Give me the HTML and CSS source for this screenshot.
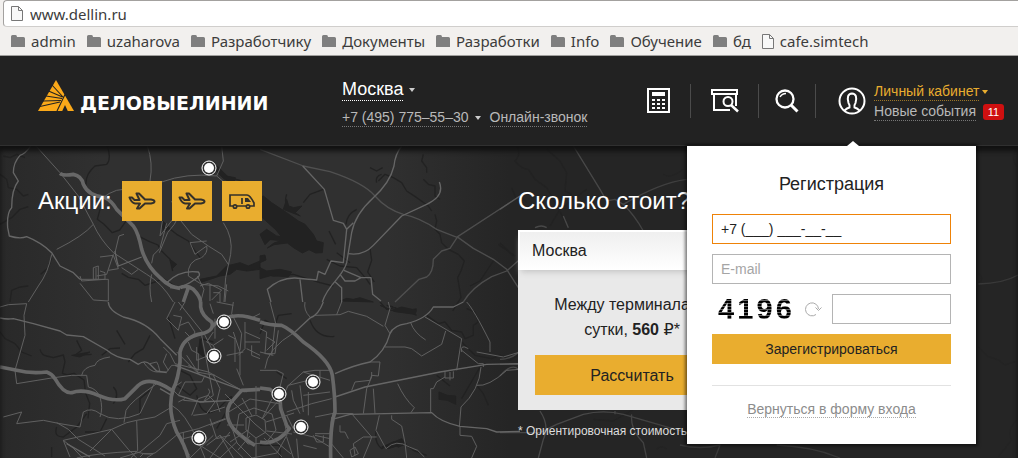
FILE: index.html
```html
<!DOCTYPE html>
<html lang="ru">
<head>
<meta charset="utf-8">
<meta name="viewport" content="width=device-width, initial-scale=1">
<title>Деловые Линии</title>
<link rel="stylesheet" href="styles.css">
</head>
<body>
<svg class="defs" width="0" height="0" aria-hidden="true">
  <symbol id="folder" viewBox="0 0 14 12"><path d="M0 1.500Q0 0 1.500 0H4.500Q6 0 6 2H12.500Q14 2 14 3.500V12H0Z" fill="#7f7f7f"/></symbol>
  <symbol id="page" viewBox="0 0 12 15"><path d="M.5.5H7.500L11.500 4.500V14.500H.5Z" fill="#f8f8f8" stroke="#777"/><path d="M7.500.5V4.500H11.500" fill="none" stroke="#777"/></symbol>
  <symbol id="plane" viewBox="0 0 28 18"><path d="M1.500 5.500H4L6.500 8H11.500L8.500 1.500H11L17 7.500H23Q26.500 8 26.500 9.500T23 11.500H17L11.500 16.500H9L12 11.500H7Q3.500 11 1.500 5.500Z" fill="none" stroke="#33302a" stroke-width="2" stroke-linejoin="round"/></symbol>
</svg>

<div class="browser">
  <div class="address">
    <svg width="12" height="15" aria-hidden="true"><use href="#page"/></svg>
    <input class="address-input" type="text" value="www.dellin.ru" aria-label="Адрес страницы">
  </div>
  <nav class="bookmarks" aria-label="Закладки">
    <a href="#"><svg width="14" height="12" aria-hidden="true"><use href="#folder"/></svg>admin</a>
    <a href="#"><svg width="14" height="12" aria-hidden="true"><use href="#folder"/></svg>uzaharova</a>
    <a href="#"><svg width="14" height="12" aria-hidden="true"><use href="#folder"/></svg>Разработчику</a>
    <a href="#"><svg width="14" height="12" aria-hidden="true"><use href="#folder"/></svg>Документы</a>
    <a href="#"><svg width="14" height="12" aria-hidden="true"><use href="#folder"/></svg>Разработки</a>
    <a href="#"><svg width="14" height="12" aria-hidden="true"><use href="#folder"/></svg>Info</a>
    <a href="#"><svg width="14" height="12" aria-hidden="true"><use href="#folder"/></svg>Обучение</a>
    <a href="#"><svg width="14" height="12" aria-hidden="true"><use href="#folder"/></svg>бд</a>
    <a href="#"><svg width="12" height="15" aria-hidden="true"><use href="#page"/></svg>cafe.simtech</a>
  </nav>
</div>

<header class="header">
  <a class="logo" href="#">
    <svg width="36" height="32" viewBox="0 0 36 32" aria-hidden="true">
      <path d="M18 0L36 31H0Z" fill="#fba919"/>
      <path d="M25 17L14 5M24.500 17L10.500 11M24 18.500L8 16M23 20.500L5 21M22 22L2 26.500M19 31L27 14.500" stroke="#222" stroke-width="1.100"/>
      <path d="M24 31.500H30L27 25Z" fill="#222"/>
    </svg>
    <span>ДЕЛОВЫЕЛИНИИ</span>
  </a>
  <div class="contacts">
    <div class="row"><button class="city dotted" type="button">Москва</button><i class="caret"></i></div>
    <div class="row"><a class="dotted" href="#">+7 (495) 775–55–30</a><i class="caret"></i><a class="dotted call" href="#">Онлайн-звонок</a></div>
  </div>
  <nav class="tools" aria-label="Сервисы">
    <a href="#" aria-label="Калькулятор"><svg width="24" height="26" viewBox="0 0 24 26"><path d="M1 1H22V24H1Z" fill="none" stroke="#fff" stroke-width="2"/><path d="M5 4H18V8H5ZM5 11h3v2H5zm5 0h3v2h-3zm5 0h3v2h-3zM5 15h3v2H5zm5 0h3v2h-3zm5 0h3v2h-3zM5 19h3v2H5zm5 0h3v2h-3zm5 0h3v2h-3z" fill="#fff"/></svg></a>
    <a href="#" aria-label="Отследить груз"><svg width="28" height="26" viewBox="0 0 28 26" fill="none" stroke="#fff" stroke-width="2"><path d="M1 2H26V6H1ZM3 6V22H19M25 6V18"/><circle cx="17" cy="13.500" r="4.500"/><path d="M20 17L27 23.500" stroke-width="2.500"/></svg></a>
    <a href="#" aria-label="Поиск"><svg width="24" height="26" viewBox="0 0 24 26" fill="none" stroke="#fff"><circle cx="10" cy="11" r="8.500" stroke-width="2.300"/><path d="M16 17L22.500 23.500" stroke-width="3"/><path d="M5 9Q7 5.500 11 5.500" stroke-width="1.500"/></svg></a>
  </nav>
  <div class="account">
    <svg width="28" height="28" viewBox="0 0 28 28" fill="none" stroke="#fff" stroke-width="2" aria-hidden="true"><circle cx="14" cy="14" r="12.500"/><path d="M6.500 23.500Q9 21 11.500 20.500Q12 18 10.500 16Q8 7 14 6.500Q20 7 17.500 16Q16 18 16.500 20.500Q19 21 21.500 23.500"/></svg>
    <div>
      <div class="row"><a class="dotted cabinet" href="#">Личный кабинет</a><i class="caret gold"></i></div>
      <div class="row"><a class="dotted" href="#">Новые события</a><span class="badge">11</span></div>
    </div>
  </div>

  <form class="popup">
    <h2>Регистрация</h2>
    <input class="field active" type="text" value="+7 (___) ___-__-__" aria-label="Телефон">
    <input class="field" type="email" placeholder="E-mail" aria-label="E-mail">
    <div class="captcha">
      <span class="code"><span>4</span><span>1</span><span>9</span><span>6</span></span>
      <button class="refresh" type="button" aria-label="Обновить код"><svg width="17" height="16" viewBox="0 0 17 16" fill="none" stroke="#aaa"><path d="M11 13.500A6.500 6.500 0 1 1 13.500 8M10.500 6.500L13.500 9.500L16.500 6.500"/></svg></button>
      <input class="field" type="text" aria-label="Код с картинки">
    </div>
    <button class="gold-button submit" type="submit">Зарегистрироваться</button>
    <div class="back"><a href="#">Вернуться в форму входа</a></div>
  </form>
</header>

<main class="hero">
  <svg class="map" viewBox="0 0 1018 312" preserveAspectRatio="xMinYMin slice" aria-hidden="true">
    <defs><linearGradient id="ground" x1="0" x2="1"><stop offset="0" stop-color="#292929"/><stop offset=".1" stop-color="#303030"/><stop offset=".38" stop-color="#303030"/><stop offset=".5" stop-color="#252525"/><stop offset="1" stop-color="#252525"/></linearGradient>
    <linearGradient id="haze" x1="0" x2="1"><stop offset=".36" stop-color="#252525" stop-opacity="0"/><stop offset=".52" stop-color="#252525" stop-opacity=".65"/></linearGradient></defs>
    <path d="M0 0H1018V312H0Z" fill="url(#ground)"/>
    <g class="water" transform="scale(.33333)">
      <path d="M322 0Q335 40 320 55L285 60Q255 85 258 120M0 85l20 15 5 25 25 5 20 20 15-5M10 30l20 5 20-10 25 10M85 182L60 190 35 215 0 235M300 190l-8 30 20 15 25 25 22-8 20-28 20 18 20 30 30 15 25 10 10 20M485 225l20 20 25 20 35 20 20 30 20 25M485 315l25 25 8 35M155 335L145 365 122 385M365 382l20 12 30 6 20 18 30-10 25-10 40 25M30 468l5-35 25-10 25-3M650 60l30 30 20 8 45 12 30 10"/>
      <path d="M485 222l25 25-20 12zM510 340l20 15-12 12zM648 60l30 30 28 5-5 18-30-15-25-25z" class="lake"/>
      <path d="M600 400l50-10 30-30 40-10 25 10 35-15v25l-40 5-30-5-20 15-30 5-60 20z" class="lake"/>
    </g>
    <g class="water" transform="translate(0 156) scale(.33333)">
      <path d="M0 90l15 20 30 15 20 25 30 12M120 142q5 18 20 20l20 5 30-8 5 20-8 35 15 5 20-5 30 20 5 40 12 30-5 45M350 85l25 42M230 115l15 30-20 15 50-3M360 138l-30 2-25 20M450 100l-20 40-25 15-20 25M505 45l20 65M530 200l40 20 20 40-20 20-40-30M170 375q-10 30 20 30l40-30 30-40M340 255q20 20 0 50M420 340V290l30-25M320 350l-20 40-45 0M590 280q20 90 80 25t-20 75M640 120l-35-10-10 40 30 20M155 435v30"/>
      <path d="M215 160l55-10-30 15z M600 110l15 60-20-20z" class="lake"/>
    </g>
    <g class="water" transform="translate(260 0) scale(.33333)">
      <path d="M330 65l20 10 18-10M350 110q-5-20 15-25M355 105l20-20 25 10 25 15 15 25 30 20 35 25 10 15M490 25l-5 20 15 20v15M490 100l15 15 20 5v30l15 10M525 205l5 20-5 25 15 15 5 25 20 20 30 15 18 20-10 30-10 20 5 30 5 30-25 40M190 130l-40 15-20 25M80 145q-10 30 10 45l30-5M290 190q-30 15-32 45M207 255l20 40M200 340l40 20 50 5 30 35 10 15M330 308l5 35-12 35 20 30M700 345l-40 60-30 15M715 295l50 35M755 125l12 30M230 320l40 30M0 380l40 10 60-5 80 25 40 10"/>
      <path class="lake" d="M0 155l10-5 25 20 45 30 35 25 20 10 25 30 10 20 20 5-3 30-20 1-20-10-20 10-25-15-20-15-40 5-20 10 20-15 30-10-25-30-50-45zM70 190l10-30 6 20 15 5 25-5-20 20 15 10zM0 265l20-15 30 20 25 3 20 15-40-5-25-2-15 15zM0 330l15-3 3 15-18 8zM0 365l20 10 40-5 35 8-10 15-50-5-35 10zM240 465l20-8 20 3 20-5 40 13z"/>
    </g>
    <g class="water" transform="translate(260 156) scale(.33333)">
      <path d="M360 0l20 22 25-5 20 12 45-8M450 30l20 10M500 40l35 25 20-5 20 25 30 5 10 20 25-10V70l15-10-10-30-25-10M605 120l40 40 50 10 25-10 30 15 25-15M150 55q20 55 73 48M0 95l15-40 30 15 10-30 40-5M530 220l40 32M660 195l-55 95M650 250l20 25 15 35M350 380q-10 40 15 60l35-20 15 15 25-10M380 10l20 5M440 430l20 15 40 15M0 430h60v38M50 210l30 20"/>
      <path class="lake" d="M537 270l25 10 25 2v25l-25-12-25-3zM360 10l35 15 30-10 45 10-5 12-60-8zM365 435l60-25 10 15-50 15z"/>
    </g>
    <g class="water" transform="translate(500 0) scale(.33333)"><path d="M50 0q15 25-5 45 20 25 40 25l20 30 35 25 30 55 25 45M140 10l40 35 20 35-5 55 20 10M60 145l20 25M150 240l30-50 40-30 40-30M0 290l40 40M280 820l60 5 70-40M470 910q15-15 30 0M550 70q-40 30-60 15"/></g>
    <g class="water" transform="translate(680 -6) scale(.33333)"><path d="M895 400q20 15 0 30l-10 50M895 620l30 30 30 10 20 15 30-10M1010 840q-30 30-15 60l-40 50M1010 20q-20 30 0 60"/></g>

    <g class="roads thin" transform="scale(.33333)">
      <path d="M108 0L180 80 235 150 280 235Q300 280 340 320L440 385Q485 410 520 468M280 235Q250 270 170 310M155 325Q145 380 115 420L85 468M280 180Q330 130 370 130M485 108Q560 80 650 90L720 150 780 185M442 0Q460 50 450 105M650 90L670 45 665 0M487 225L480 270 530 205M515 165l20 50 40 50 50 35 40 25 20 30M478 320l25-60 20-25 15-30M455 352l5-25 20-20 20-75M670 230q30 45 22 95l-15 70-5 73M455 385q-10 40 0 83M570 290l50-5M570 290l15 35 35-25M620 300q5 20-15 35-45 10-40 55l40 25 50 5 30 15M592 390l20 40-10 38M600 420l25-8 40 20-30 30M300 333l40-5 15 40-30 5M340 325l-20 60-30 5M345 320l12-50 15-5M365 365l30 20 20-15M280 365l15-5v40h-15zM288 365v35M300 375l15 5v20l-70 5-5-15M240 400l85 0v65l-45-3-40-50M630 415v50M680 415l-5 53M640 440h20v28"/>
    </g>
    <g class="roads medium" transform="scale(.33333)"><path d="M92 0Q75 25 60 28 40 50 40 80L55 105Q35 130 35 185 20 200 23 245L28 270Q60 280 80 272 125 290 155 320L180 360 220 380 240 400M345 315Q350 345 355 360L425 333M500 410Q540 370 595 378 605 390 585 400 545 430 510 425"/></g>
    <g class="roads heavy" transform="scale(.33333)"><path d="M180 82Q190 90 220 85 245 90 250 115 265 150 315 155 335 165 350 190L400 240Q415 260 425 310 440 360 480 395 510 425 540 427M540 425Q560 415 580 430 600 450 602 468M565 425l-15 43"/></g>

    <g class="roads thin" transform="translate(0 156) scale(.33333)">
      <path d="M0 15L25 8 80 5 72 40 75 100 45 205 50 245 155 228 215 220 260 220 265 255Q290 260 300 285 310 320 300 345M245 220q5-25 40-30 5-20 45-25M10 345l55-15-15 35 80-10 50 10 60 10 10-45q25-15 50 5 50 30 120 0L465 240M372 362L378 325Q390 300 470 245M190 415L335 382 380 362 410 355 465 345 515 315M190 415l20 50M190 415q30 20 60 55M170 362l35 20 30 30 80 50M335 382l-65 65M335 382l50 60 25 26M410 355l3 90-20 23M410 450q50 15 65-5l60-50 60-15 80-30M515 310q40 20 80 110l20 48M230 468q60-15 180-20M500 365l-20 35-60 50-60 18M500 365l40-10M430 180q20 30 40 30h30l15-20 20 0M450 185l20-5 5 10 5 20M490 135l20 20 15 30 100 25 110 60M500 155l-10 25 15 25M530 150l60 60 55 10M535 0l20 25 60 75 20 40M555 0l-15 25M520 40l25 5-10 40-35-35 25-50M540 70l25-10 20 30-10 20-20-20M565 120l10 25 20 10v50l-30-15M605 100l25 130 10 50-30 20-60-5M545 240l-30 20 20 20 20-40 50 0 10-20M610 300l20-30-5-10M575 340l20-50 30-10 20 20-25 35-40 5M555 290l-20 10M640 90l-20 30 20 10 30-20M640 220l20 40-10 40 10 30M700 90l20 60 0 70M700 0l-5 35 30 60-5 50M735 60v80l-20 20M640 35l-10-30M650 0l50 10M735 90l45 20M735 120l45 0M740 140l40 20M680 160l50-10M730 250l-20-50M630 330l45-15M630 350l20 60 40-10M680 350l-50 20M620 430l40-30 40 68M600 430l60 38M640 400l-70 68M690 390l-60 78M710 420l-50 48M660 400l70 68M550 390v50l20 20M550 410l60-15M420 465l10-10h30l-20 13"/>
      <path d="M590 135v40l50-20M560 160l40 60M640 130l20 50M645 50v60M750 50l30-15M755 130v30l25 10M685 100l20 10v70"/>
    </g>
    <g class="roads medium" transform="translate(0 156) scale(.33333)"><path d="M0 48q20 5 40 2l60 15 80 22 20 12 50 5 70 40Q350 170 390 172l25 15q20-15 35 0l20 20 30 5M325 0Q325 25 370 45 440 60 480 110L530 160M525 190L740 270M535 280L600 300 700 295M200 425L270 465M515 280L480 260"/></g>
    <g class="roads heavy" transform="translate(0 156) scale(.33333)"><path d="M0 195Q30 200 50 205 90 215 140 210 155 215 165 230 190 275 215 272 250 260 295 280 340 300 375 290 390 275 415 250 450 220 515 265M602 0V15Q605 40 635 60 645 85 605 95 550 105 540 150V180Q535 230 520 260 500 320 530 390 555 430 565 468M635 75Q680 30 745 45L780 55M780 262L725 265 690 305Q670 340 700 380 730 410 765 430"/></g>

    <g class="roads medium" transform="translate(260 0) scale(.33333)"><path d="M425 0Q405 25 402 60 390 110 340 155 285 205 275 260L260 350Q255 370 230 400 195 440 187 468"/><path d="M128 60L193 130 220 223 250 232 260 250 250 350 213 345 195 385 175 376 170 402 105 396Q60 395 22 430L33 468M260 250L280 230M265 323Q310 330 340 298L425 210 500 175Q555 150 538 108M225 407L245 425V468M240 385L255 405H285L303 395 252 373M303 395h30l5 50 25 20M120 400l8 68"/></g>
    <g class="roads medium" transform="translate(260 0) scale(.33333)" opacity=".6"><path d="M0 10L130 60 210 77Q310 110 345 150 380 190 430 205 480 215 530 250 580 270 595 275L640 307 700 340 740 370 775 425M780 150L593 272 570 307 545 315 520 340Q520 380 500 393L477 400 405 468"/><path d="M610 468Q635 425 695 392L740 375 780 340"/></g>

    <g class="roads thin" transform="translate(260 156) scale(.33333)">
      <path d="M165 40l75-2 25-10 55 15 50 30M245 0l-15 38M150 45q-20-20-15-45M375 70l15-50-5-20M375 70l15 25M452 62q10 30 45 52M375 135l60 0 20 5 30 22 60-35 12-40M495 45l110 65-15 95M605 145l50 40h15v10M605 150q-5-25 20-10M620 0q20 20 70 120v30M650 150l80 15 50-15M275 265l10-25 45-5 5-15M310 335l10-75 15-35 0-15M330 180l30 0-5 42-20-2M345 335l-5-75M413 245q20 45 50 72l-10 15M555 208v20h25v-20M570 210v25M555 225l-25 15-10 20h-8v70M600 375v25l35 3 15 30-15 35M650 250q35 5 90-45l40-3M663 195q-5 70-60 120l-5 60M358 340l-10 45 30 55q30-30 70-5l25 10 20 20M395 340v12l30 20 10 50 5 46M215 335l60 0 60 70-5 15-20 48M350 405l-40 0-30 20 5 35M240 370v20h15l10 20M210 420l40 48M165 345l50-10 65 0M165 400l45 10M0 205l50 0 20 10-10 40M80 255l50-45 80 25M130 210l35-5h45M120 250l10 80M145 270v70M180 205v30M80 330l75-25 60-15M80 340l20 40M100 390l60 15 50 30M110 410l5 58M80 405l20 63M130 430l40 10M165 395l45 0 5-50M160 400l10 20h20v-20M75 270l10-20 80-20M95 265l5 30 20 40M130 280l80-10M15 200q5-60 90-110M45 70l-10 90M0 80l20 10-5 65 30 0M0 150l40 10M20 105l25 15-25 25M30 0l20 75M55 85l-10 70M270 445l15-10 10 20-20 10z"/>
    </g>
    <g class="roads medium" transform="translate(260 156) scale(.33333)"><path d="M190 0Q175 40 150 48L105 90M225 215Q280 190 330 180 375 150 390 95 400 70 440 65 500 50 520 15L580 15 610 0"/><path d="M225 285L315 255 540 210 680 187 780 185M225 350L270 337 515 332Q540 360 600 373L680 380 710 390 780 388"/></g>
    <g class="roads heavy" transform="translate(260 156) scale(.33333)"><path d="M0 60Q30 70 65 70 90 80 130 120 210 175 217 220 225 280 225 330 210 370 212 468M0 258L30 262 60 285 62 320 80 370 88 380Q50 430 0 420"/></g>
    <g class="roads center"><path d="M227 267l23-14 31 5 6 31-10 18-25 5-15-15zM239 268l15-6 18 6 4 16-10 13-18 1-12-12zM246 272l10-3 9 5 1 12-10 6-10-8zM225 248l30 30 36 30M256 240l0 28M256 292v20M280 253l-18 20M230 296l18-12M227 279h17M267 285l25 3M264 292l18 19M238 304l12-14M242 252l10 18M294 267l-28 9M250 272l-3 20M272 253l-10 20"/></g>
    <g class="roads medium" transform="translate(500 0) scale(.33333)" opacity=".55"><path d="M220 0L300 130 320 165 345 160 370 175M370 175Q480 110 560 100M370 175Q405 210 430 255M0 190L60 150M105 245q20-10 35 0M190 210l15 35M0 640Q30 640 55 620M0 655H55M0 690Q35 650 55 670M0 860Q50 860 120 860L170 835 250 805Q310 790 370 805L560 860M395 805Q390 850 430 890L440 936M120 795q30 45 10 85l-15 56M345 795v10"/></g>
    <g class="roads medium" transform="translate(680 -6) scale(.33333)" opacity=".45"><path d="M895 432Q970 430 1014 405M0 915Q60 930 120 915L105 954M290 915Q400 920 480 954"/></g>
    <path d="M340 0H1018V312H340Z" fill="url(#haze)" opacity=".5"/>
    <g class="pins"><circle cx="209" cy="22" r="7"/><circle cx="224" cy="176" r="7"/><circle cx="214" cy="210" r="7"/><circle cx="199" cy="292" r="7"/><circle cx="313" cy="236" r="7"/><circle cx="279" cy="248" r="7"/><circle cx="301" cy="281" r="7"/></g>
    <g class="pin-dots"><circle cx="209" cy="22" r="5"/><circle cx="224" cy="176" r="5"/><circle cx="214" cy="210" r="5"/><circle cx="199" cy="292" r="5"/><circle cx="313" cy="236" r="5"/><circle cx="279" cy="248" r="5"/><circle cx="301" cy="281" r="5"/></g>
  </svg>

  <section class="promo">
    <h2>Акции:</h2>
    <a href="#" aria-label="Авиаперевозка"><svg width="28" height="18" aria-hidden="true"><use href="#plane"/></svg></a>
    <a href="#" aria-label="Авиадоставка"><svg width="28" height="18" aria-hidden="true"><use href="#plane"/></svg></a>
    <a href="#" aria-label="Автоперевозка"><svg width="28" height="18" viewBox="0 0 28 18" fill="none" stroke="#33302a" stroke-width="1.700"><path d="M5 14H2V3H19Q22 3 26 11V14H22M9 14H18M14 6V12"/><circle cx="7" cy="14.500" r="1.700"/><circle cx="20" cy="14.500" r="1.700"/><path d="M17 6H20L23 10H17Z" fill="#33302a" stroke="none"/></svg></a>
  </section>

  <section class="price">
    <h2>Сколько стоит?</h2>
    <form class="card">
      <input class="from" type="text" value="Москва" aria-label="Город отправления">
      <p>Между терминалами<br>сутки, <b>560</b> <span class="ruble">₽</span>*</p>
      <button class="gold-button calc" type="button">Рассчитать</button>
    </form>
    <small>* Ориентировочная стоимость</small>
  </section>
</main>
</body>
</html>
```
FILE: styles.css
```css
* { box-sizing: border-box; }
body { margin: 0; min-height: 100vh; display: flex; flex-direction: column; overflow-x: hidden; background: #252525; color: #222; font: 14px/20px "Liberation Sans", Arial, sans-serif; }
a { color: inherit; text-decoration: none; }
button, input { font: inherit; color: inherit; border-radius: 0; }
button { padding: 0; border: 0; background: none; cursor: pointer; }
h2, p { margin: 0; font-weight: 400; }
.defs { position: absolute; }

.browser { padding-left: 3px; background: #f2f0ee; border-bottom: 1px solid #a09f9d; color: #3c3c3c; font-family: "Noto Sans", "Open Sans", sans-serif; }
.address { display: flex; align-items: center; gap: 7px; height: 27px; padding-left: 7px; background: #fff; border: 1px solid #a3a19f; border-right: 0; border-bottom-color: #d0cecc; border-radius: 4px 0 0 4px; }
.address-input { flex: 1; min-width: 0; padding: 0; border: 0; outline: 0; background: none; font-size: 15px; }
.bookmarks { display: flex; align-items: center; gap: 11px; height: 28px; padding-left: 8px; font-size: 15px; white-space: nowrap; }
.bookmarks a { display: flex; align-items: center; gap: 6px; }

.header { position: relative; z-index: 2; display: flex; align-items: center; min-height: 90px; padding: 0 14px 0 38px; background: #222; border-bottom: 1px solid #303030; color: #b9b9b9; white-space: nowrap; }
.logo { display: flex; align-items: flex-end; gap: 6px; width: 304px; padding-bottom: 9px; color: #fff; font: bold 19px/18px "DejaVu Sans", sans-serif; }
.row { display: flex; align-items: center; }
.dotted { border-bottom: 1px dotted #777; line-height: 17px; }
.caret { margin-left: 6px; border: 3px solid transparent; border-top: 4px solid #ccc; border-bottom: 0; }
.contacts { display: grid; gap: 8px; padding-top: 4px; }
.city { color: #fff; font-size: 18px; line-height: 21px; border-bottom: 1px dotted #fff; }
.call { margin-left: 9px; }
.tools { display: flex; align-items: center; margin-left: auto; }
.tools a { display: flex; align-items: center; height: 34px; padding: 0 19px 0 20px; border-right: 1px solid #4b4b4b; }
.tools a:last-child { padding: 0 16px; }
.account { display: flex; align-items: center; gap: 8px; padding-left: 22px; }
.account > div { display: grid; gap: 2px; padding-top: 2px; }
.cabinet { color: #e9ad2f; border-color: #9b7628; }
.caret.gold { margin-left: 3px; border-top-color: #e9ad2f; }
.badge { margin-left: 7px; width: 21px; height: 16px; border-radius: 3px; background: #cf1010; color: #fff; font-size: 11px; line-height: 17px; text-align: center; }

.popup { position: absolute; top: 90px; right: 42px; width: 289px; padding: 25px; background: #fff; box-shadow: 0 0 3px 2px rgba(0, 0, 0, .5); color: #222; }
.popup::before { content: ""; position: absolute; top: -5px; left: 160px; border: 6px solid transparent; border-top: 0; border-bottom: 5px solid #fff; }
.popup h2 { margin-bottom: 17px; font-size: 18px; line-height: 26px; text-align: center; }
.field { display: block; width: 100%; height: 30px; margin-bottom: 10px; padding: 0 8px; border: 1px solid #b4b4b4; outline: 0; background: #fff; }
.field::placeholder { color: #a5a5a5; opacity: 1; }
.field.active { border-color: #ee8208; }
.captcha { display: flex; align-items: center; margin-bottom: 10px; }
.captcha .field { flex: 1; min-width: 0; margin: 0; }
.code { display: flex; justify-content: space-between; width: 75px; margin-right: 18px; padding-left: 6px; background: repeating-linear-gradient(#000 0 2px, #666 2px 3px); background-clip: text; color: transparent; font: bold 29px/34px "Liberation Sans", Arial, sans-serif; }
.code { width: 80px; margin-right: 13px; }
.refresh { display: flex; width: 27px; }
.gold-button { display: block; width: 100%; background: #e9ad2f; color: #222; }
.submit { height: 30px; }
.captcha { height: 30px; }
.back { margin-top: 21px; padding-top: 13px; border-top: 1px solid #e2e2e2; color: #8c8c8c; text-align: center; }
.back a { border-bottom: 1px dotted #aaa; }

.hero { position: relative; flex: 1; display: grid; grid-template-columns: 480px 228px; padding: 35px 0 10px 38px; overflow: hidden; box-shadow: inset 0 5px 5px #111; }
.map { position: absolute; inset: 0; z-index: -1; width: 100%; height: 100%; }
.water path { fill: none; stroke: #222; stroke-width: 4; stroke-linejoin: round; }
.water .lake { fill: #222; stroke-width: 3; }
.roads path { fill: none; stroke: #606060; stroke-linejoin: round; }
.thin path { stroke-width: 3; }
.center path { stroke-width: 1; }
.medium path { stroke: #666; stroke-width: 4; }
.heavy path { stroke: #676767; stroke-width: 11; }
.pins { fill: #303030; stroke: #fff; stroke-width: 1; }
.pin-dots { fill: #fff; }
.promo { display: flex; align-items: center; gap: 10px; height: 40px; color: #fff; }
.promo a { display: grid; place-items: center; width: 40px; height: 40px; background: #e9ad2f; }
.hero h2 { font-size: 24px; line-height: 40px; }
.price h2 { color: #fff; white-space: nowrap; }
.card { margin: 9px 0 10px; padding-bottom: 15px; background: #e9e9e9; font-size: 16px; line-height: 25px; text-align: center; }
.from { display: block; width: 100%; height: 40px; padding: 0 12px; border: 2px solid #fff; border-bottom: 0; background: linear-gradient(#efefef, #fff); box-shadow: 0 5px 6px -3px #c4c4c4; outline: 0; }
.card p { padding: 22px 0 13px; }
.ruble { font-family: "DejaVu Sans", sans-serif; }
.calc { width: auto; margin: 0 17px; min-width: 194px; height: 40px; }
small { display: block; color: #ddd; font-size: 12px; line-height: 22px; }
```
